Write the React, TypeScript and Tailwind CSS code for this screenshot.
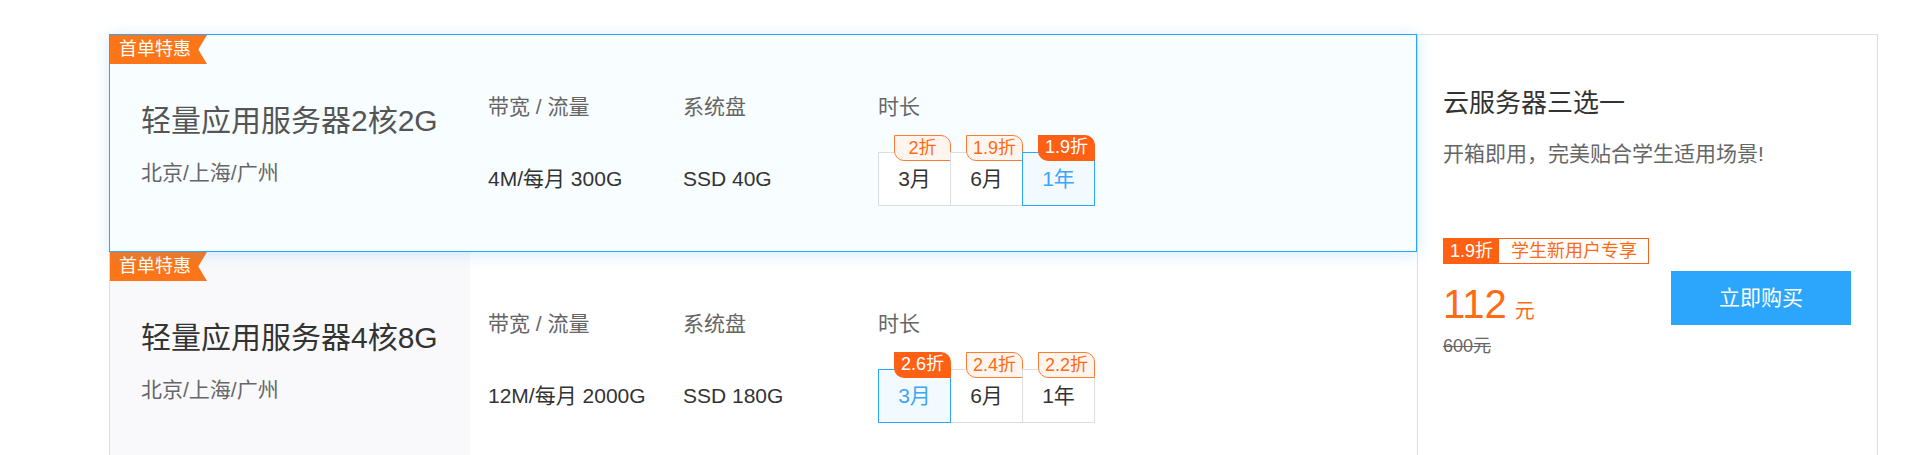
import React from 'react';

interface Duration {
  label: string;
  discount: string;
}

interface Plan {
  title: string;
  regions: string;
  bandwidth: string;
  disk: string;
  durations: Duration[];
  selected: number;
  active: boolean;
}

const plans: Plan[] = [
  {
    title: '轻量应用服务器2核2G',
    regions: '北京/上海/广州',
    bandwidth: '4M/每月 300G',
    disk: 'SSD 40G',
    durations: [
      { label: '3月', discount: '2折' },
      { label: '6月', discount: '1.9折' },
      { label: '1年', discount: '1.9折' },
    ],
    selected: 2,
    active: true,
  },
  {
    title: '轻量应用服务器4核8G',
    regions: '北京/上海/广州',
    bandwidth: '12M/每月 2000G',
    disk: 'SSD 180G',
    durations: [
      { label: '3月', discount: '2.6折' },
      { label: '6月', discount: '2.4折' },
      { label: '1年', discount: '2.2折' },
    ],
    selected: 0,
    active: false,
  },
];

function PlanCard({ plan }: { plan: Plan }) {
  return (
    <div
      className={`relative flex h-[218px] ${
        plan.active
          ? 'z-10 border border-[#2ba6fd] bg-[#f8fdff] shadow-[0_2px_14px_rgba(43,166,253,0.22)]'
          : 'border-l border-[#ddd] bg-white'
      }`}
    >
      {/* Ribbon */}
      <div className="absolute left-0 top-0 h-[29px] w-[97px] bg-[#fc7519] pl-[9px] text-[18px] leading-[29px] text-white [clip-path:polygon(0_0,100%_0,91%_50%,100%_100%,0_100%)]">
        首单特惠
      </div>

      {/* Name */}
      <div className={`flex w-[360px] flex-col pl-[31px] pt-[71px] ${plan.active ? '' : 'bg-[#f9f9fb]'}`}>
        <div className={`text-[30px] leading-[30px] ${plan.active ? 'text-[#555]' : 'text-[#333]'}`}>
          {plan.title}
        </div>
        <div className="mt-[26px] text-[21px] leading-[21px] text-[#666]">{plan.regions}</div>
      </div>

      {/* Specs */}
      <div className="flex pl-[18px] pt-[61px]">
        <div className="w-[195px]">
          <div className="text-[21px] leading-[21px] text-[#666]">带宽 / 流量</div>
          <div className="mt-[35px] flex h-[54px] items-center text-[21px] text-[#333]">{plan.bandwidth}</div>
        </div>
        <div className="w-[195px]">
          <div className="text-[21px] leading-[21px] text-[#666]">系统盘</div>
          <div className="mt-[35px] flex h-[54px] items-center text-[21px] text-[#333]">{plan.disk}</div>
        </div>
        <div>
          <div className="text-[21px] leading-[21px] text-[#666]">时长</div>
          <div className="mt-[35px] flex">
            {plan.durations.map((d, idx) => {
              const on = idx === plan.selected;
              return (
                <div
                  key={d.label}
                  className={`relative flex h-[54px] w-[73px] items-center justify-center border text-[21px] ${
                    idx > 0 ? '-ml-px' : ''
                  } ${on ? 'z-10 border-[#2ba6fd] bg-[#f3faff] text-[#3aa6f5]' : 'border-[#ddd] bg-white text-[#333]'}`}
                >
                  {d.label}
                  <span
                    className={`absolute -right-px -top-[18px] h-[26px] w-[57px] rounded-bl-[10px] rounded-tr-[10px] text-center text-[18px] leading-[24px] ${
                      on ? 'bg-[#ff6013] text-white' : 'border border-[#ff7a33] bg-[#fff5ef] text-[#ff6a13]'
                    }`}
                  >
                    {d.discount}
                  </span>
                </div>
              );
            })}
          </div>
        </div>
      </div>
    </div>
  );
}

export default function App() {
  return (
    <div className="h-[455px] w-[1911px] overflow-hidden bg-white pl-[109px] pt-[34px] [font-family:'Liberation_Sans','Noto_Sans_CJK_SC',sans-serif]">
      <div className="flex">
        <div className="w-[1308px]">
          {plans.map((plan) => (
            <PlanCard key={plan.title} plan={plan} />
          ))}
        </div>

        {/* Summary panel */}
        <div className="h-[460px] w-[461px] border border-[#ddd] bg-white pl-[25px] pr-[26px] pt-[55px]">
          <div className="text-[26px] leading-[26px] text-[#333]">云服务器三选一</div>
          <div className="mt-[27px] text-[21px] leading-[21px] text-[#666]">开箱即用，完美贴合学生适用场景!</div>

          <div className="mt-[74px] flex h-[26px] w-[206px] border border-[#ff6013] text-[18px] leading-[24px]">
            <span className="w-[55px] bg-[#ff6013] text-center text-white">1.9折</span>
            <span className="flex-1 pl-[12px] text-[#ff6a13]">学生新用户专享</span>
          </div>

          <div className="flex justify-between">
            <div>
              <div className="mt-[20px] flex items-baseline text-[#ff6a13]">
                <span className="text-[40px] leading-[40px]">112</span>
                <span className="ml-[8px] text-[20px]">元</span>
              </div>
              <div className="mt-[11px] text-[18px] leading-[18px] text-[#666] line-through">600元</div>
            </div>
            <button
              type="button"
              className="mt-[7px] h-[54px] w-[180px] bg-[#2ca6fc] text-[21px] text-white"
            >
              立即购买
            </button>
          </div>
        </div>
      </div>
    </div>
  );
}
